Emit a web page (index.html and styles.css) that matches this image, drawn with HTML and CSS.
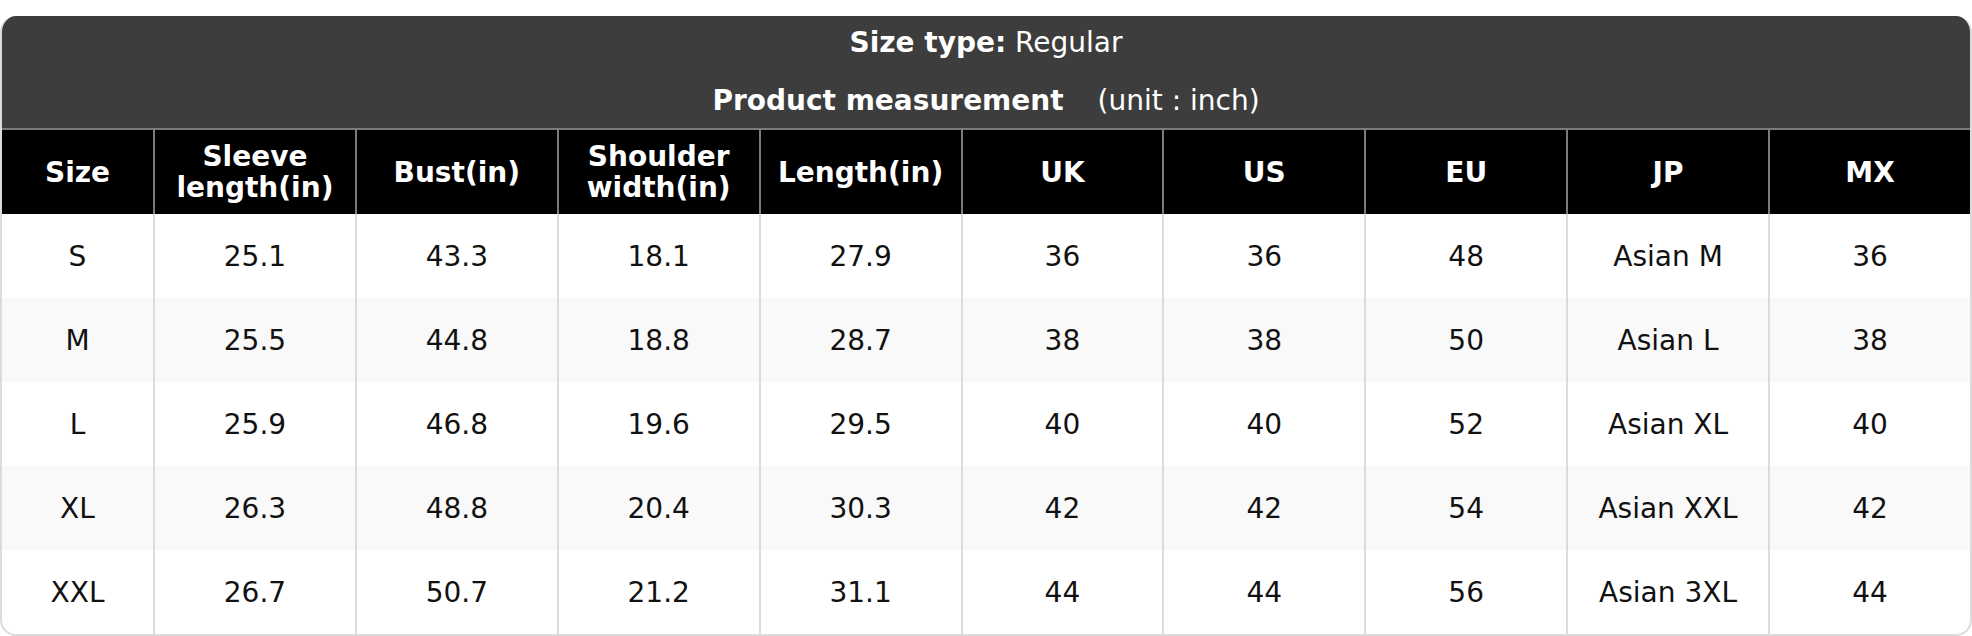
FILE: index.html
```html
<!DOCTYPE html>
<html lang="en">
<head>
<meta charset="utf-8">
<title>Size chart</title>
<link rel="stylesheet" href="styles.css">
</head>
<body>
<div class="card">
  <div class="caption">
    <div class="cap-line"><b>Size type:</b> Regular</div>
    <div class="cap-line cap-line-2"><b>Product measurement</b><span class="unit">(unit : inch)</span></div>
  </div>
  <table class="chart">
    <colgroup>
      <col class="c-size">
      <col><col><col><col><col><col><col><col><col>
    </colgroup>
    <thead>
      <tr>
        <th>Size</th><th>Sleeve<br>length(in)</th><th>Bust(in)</th><th>Shoulder<br>width(in)</th><th>Length(in)</th><th>UK</th><th>US</th><th>EU</th><th>JP</th><th>MX</th>
      </tr>
    </thead>
    <tbody>
      <tr><td>S</td><td>25.1</td><td>43.3</td><td>18.1</td><td>27.9</td><td>36</td><td>36</td><td>48</td><td>Asian M</td><td>36</td></tr>
      <tr><td>M</td><td>25.5</td><td>44.8</td><td>18.8</td><td>28.7</td><td>38</td><td>38</td><td>50</td><td>Asian L</td><td>38</td></tr>
      <tr><td>L</td><td>25.9</td><td>46.8</td><td>19.6</td><td>29.5</td><td>40</td><td>40</td><td>52</td><td>Asian XL</td><td>40</td></tr>
      <tr><td>XL</td><td>26.3</td><td>48.8</td><td>20.4</td><td>30.3</td><td>42</td><td>42</td><td>54</td><td>Asian XXL</td><td>42</td></tr>
      <tr><td>XXL</td><td>26.7</td><td>50.7</td><td>21.2</td><td>31.1</td><td>44</td><td>44</td><td>56</td><td>Asian 3XL</td><td>44</td></tr>
    </tbody>
  </table>
</div>
</body>
</html>
```

FILE: styles.css
```css
html, body {
  margin: 0;
  padding: 0;
  background: #ffffff;
}
body {
  padding-top: 16px;
  font-family: "DejaVu Sans", Verdana, sans-serif;
  font-size: 28px;
}
.card {
  width: 1972px;
  box-sizing: border-box;
  border: 2px solid #dcdcdc;
  border-top: 0;
  border-radius: 16px;
  overflow: hidden;
}
.caption {
  background: #3d3d3d;
  color: #ffffff;
  height: 112px;
  box-sizing: border-box;
  padding-top: 10px;
  text-align: center;
}
.cap-line {
  line-height: 34px;
}
.cap-line-2 {
  margin-top: 24px;
}
.unit {
  margin-left: 34px;
}
.chart {
  width: 100%;
  table-layout: fixed;
  border-collapse: separate;
  border-spacing: 0;
}
.c-size {
  width: 151px;
}
.chart th {
  background: #000000;
  color: #ffffff;
  font-weight: bold;
  height: 84px;
  padding: 0;
  line-height: 31px;
  border-top: 2px solid #7b7b7b;
  border-left: 2px solid #7b7b7b;
  text-align: center;
  vertical-align: middle;
}
.chart td {
  height: 84px;
  padding: 0;
  color: #111111;
  text-align: center;
  vertical-align: middle;
  border-left: 2px solid #dcdcdc;
}
.chart th:first-child,
.chart td:first-child {
  border-left: 0;
}
.chart tbody tr:nth-child(even) td {
  background: #f9f9f9;
}
```
